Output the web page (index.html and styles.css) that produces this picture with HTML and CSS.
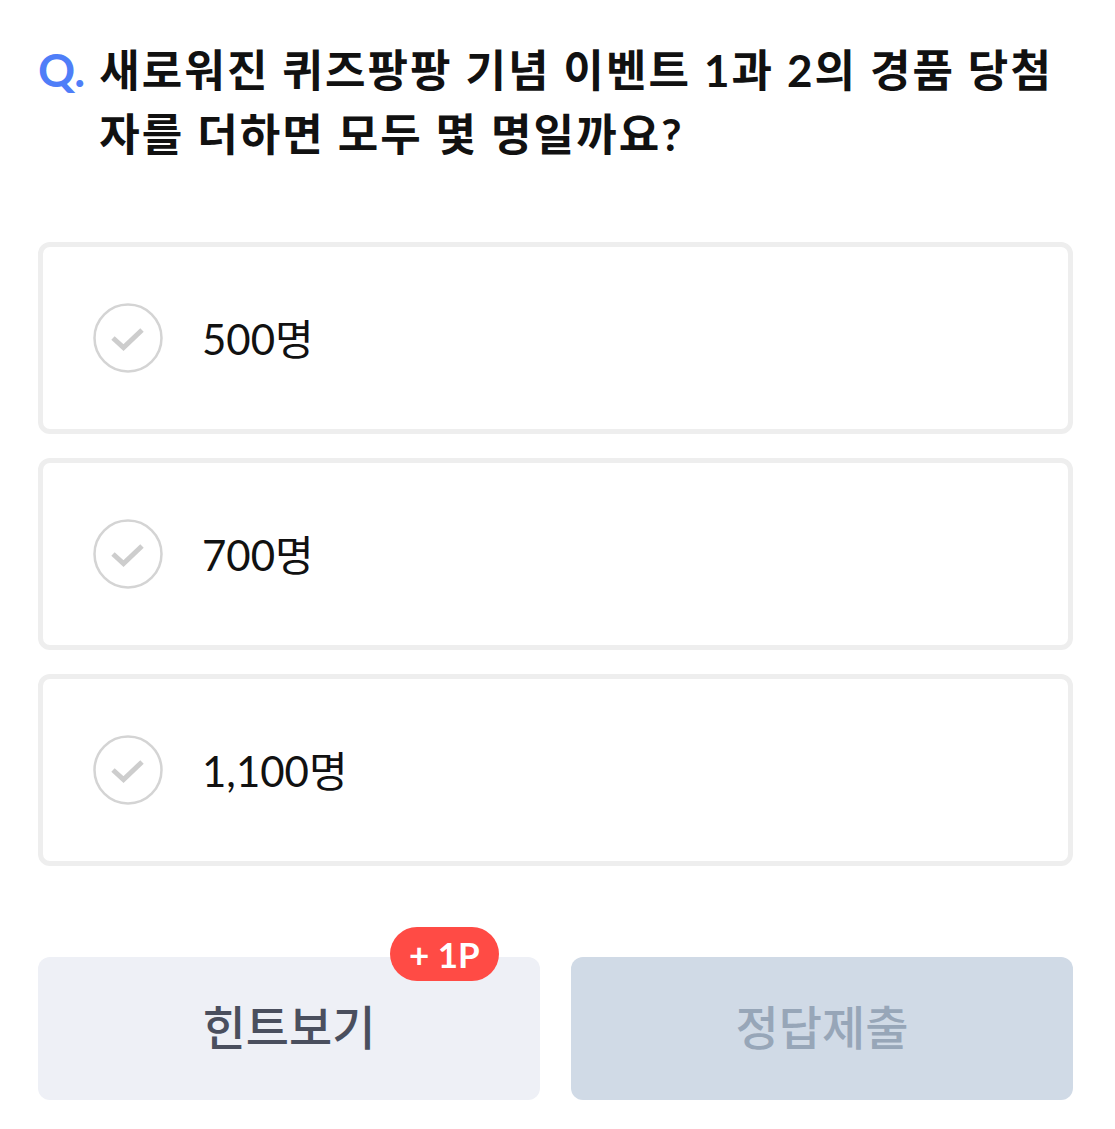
FILE: index.html
```html
<!DOCTYPE html>
<html lang="ko">
<head>
<meta charset="utf-8">
<link rel="stylesheet" href="styles.css">
</head>
<body>
<div class="page">
  <div class="question">
    <span class="q-mark">Q.</span>
    <p class="q-text">새로워진 퀴즈팡팡 기념 이벤트 1과 2의 경품 당첨자를 더하면 모두 몇 명일까요?</p>
  </div>
  <div class="options">
    <div class="option">
      <span class="check"><svg viewBox="0 0 70 70" width="70" height="70"><circle cx="35" cy="35" r="33.5" fill="none" stroke="#d4d4d4" stroke-width="2.5"/><path d="M20 35 L30.5 44.5 L49 27" fill="none" stroke="#cdcdcd" stroke-width="5" stroke-linecap="butt" stroke-linejoin="miter"/></svg></span>
      <span class="label">500명</span>
    </div>
    <div class="option">
      <span class="check"><svg viewBox="0 0 70 70" width="70" height="70"><circle cx="35" cy="35" r="33.5" fill="none" stroke="#d4d4d4" stroke-width="2.5"/><path d="M20 35 L30.5 44.5 L49 27" fill="none" stroke="#cdcdcd" stroke-width="5" stroke-linecap="butt" stroke-linejoin="miter"/></svg></span>
      <span class="label">700명</span>
    </div>
    <div class="option">
      <span class="check"><svg viewBox="0 0 70 70" width="70" height="70"><circle cx="35" cy="35" r="33.5" fill="none" stroke="#d4d4d4" stroke-width="2.5"/><path d="M20 35 L30.5 44.5 L49 27" fill="none" stroke="#cdcdcd" stroke-width="5" stroke-linecap="butt" stroke-linejoin="miter"/></svg></span>
      <span class="label">1,100명</span>
    </div>
  </div>
  <div class="actions">
    <button class="btn btn-hint">힌트보기<span class="badge">+ 1P</span></button>
    <button class="btn btn-submit">정답제출</button>
  </div>
</div>
</body>
</html>
```
FILE: styles.css
```css
* { box-sizing: border-box; }
html, body { margin: 0; padding: 0; background: #fff; }
body { font-family: "Lato", "Noto Sans CJK KR", sans-serif; color: #111; }
.page { padding: 38px 42px 0 38px; width: 100%; }
.question { display: flex; align-items: flex-start; gap: 14px; }
.q-mark { color: #4f7ef8; font-size: 46px; font-weight: 700; line-height: 64px; font-family: "Lato", sans-serif; flex: none; }
.q-text { margin: 0; font-size: 44px; font-weight: 700; line-height: 64px; font-family: "Lato", "Noto Sans CJK KR", sans-serif; color: #111; letter-spacing: 2.1px; }
.options { margin-top: 76px; display: flex; flex-direction: column; gap: 24px; }
.option { height: 192px; border: 5px solid #eeeeee; border-radius: 12px; display: flex; align-items: center; padding-left: 50px; gap: 39px; }
.check { width: 70px; height: 70px; display: block; flex: none; }
.check svg { display: block; }
.label { font-size: 42px; font-family: "Lato", "Noto Sans CJK KR", sans-serif; color: #111; margin-top: -4px; }
.actions { margin-top: 91px; display: flex; gap: 31px; }
.btn { position: relative; flex: 1; height: 143px; border: none; border-radius: 12px; font-family: "Noto Sans CJK KR", sans-serif; font-size: 47px; font-weight: 500; padding: 0 0 8px 0; line-height: 1; }
.btn-hint { background: #eef0f6; color: #4a4f5e; }
.btn-submit { background: #d0dae6; color: #97a6b8; }
.badge { position: absolute; top: -30px; left: 352px; height: 54px; padding: 0 19px; border-radius: 27px; background: #ff4b45; color: #fff; font-family: "Lato", sans-serif; font-weight: 700; font-size: 35px; line-height: 54px; white-space: nowrap; }
```
